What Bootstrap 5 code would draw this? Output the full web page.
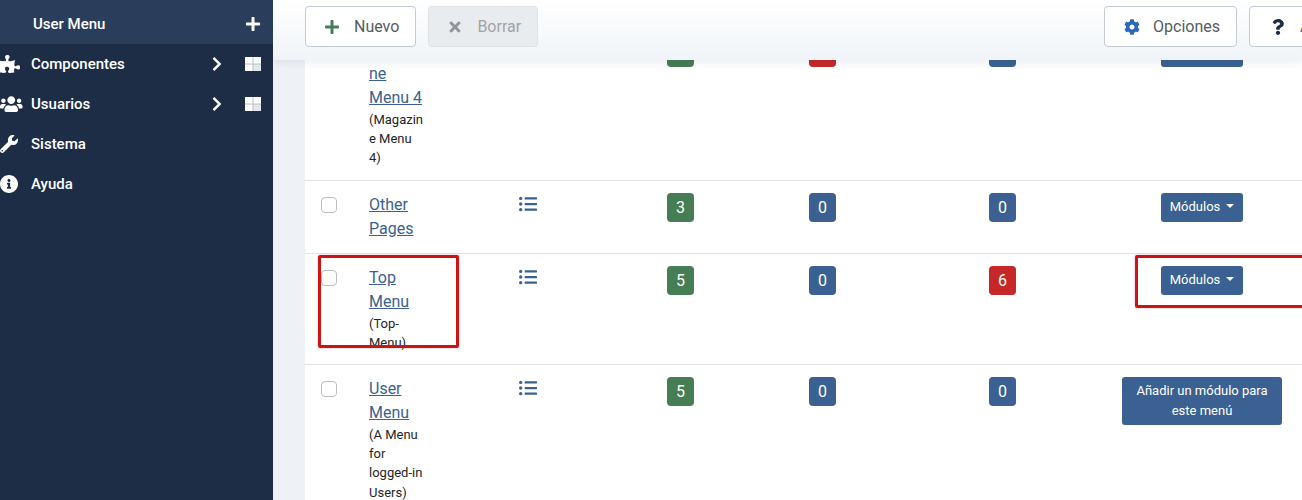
<!DOCTYPE html>
<html>
<head>
  <title>Menús</title>
  <meta charset="UTF-8" />
  <meta name="viewport" content="width=device-width, initial-scale=1" />
  <link href="https://cdn.jsdelivr.net/npm/bootstrap@5.3.2/dist/css/bootstrap.min.css" rel="stylesheet">
  <style>
    body { height: 500px; overflow: hidden; background: #eef2f7; font-family: Roboto, "Liberation Sans", sans-serif; }
    .shell { height: 500px; }
    .side-bar { width: 273px; background: #1c2d45; color: #fff; font-size: 15px; font-weight: 500; }
    .side-head { height: 44px; padding: 4px 13px 0 33px; background: #2a3e5c; }
    .side-item { height: 40px; padding: 0 12px 0 0; }
    .side-ico { width: 31px; flex: none; }
    .side-ico svg { height: 18px; display: block; fill: #fff; }
    .side-arrow { height: 16px; fill: #fff; margin-right: 23px; }
    .side-grid { width: 16px; height: 14px; }
    .side-plus { width: 14px; height: 16px; fill: #fff; }
    .main-area { flex: 1; min-width: 0; overflow: hidden; }
    .tool-bar { left: 0; right: 0; top: 0; height: 60px; padding: 6px 0 0 32px; z-index: 3;
      background: linear-gradient(#fff, #f0f4f8); box-shadow: 0 3px 8px rgba(30, 50, 80, .08); }
    .tool-btn { height: 41px; padding: 0 16px 0 19px; background: #fff; border: 1px solid #c3cad3; border-radius: 4px; color: #555b62; font-size: 16px; }
    .tool-btn svg { height: 16px; width: 14px; margin-right: 15px; flex: none; }
    .tool-btn.is-off { background: #e9ecef; border-color: #dee2e6; color: #9ea4aa; opacity: 1; }
    .tool-btn svg.ico-cog { width: 16px; margin-right: 13px; }
    .tool-gap { margin-left: 12px; }
    .tool-help { width: 120px; margin-right: -67px; padding-left: 21px; flex: none; }
    .sheet { margin: 26px 0 0 32px; }
    .menu-table { table-layout: fixed; width: 997px; margin: 0; border-color: #dfe2e6; }
    .menu-table td { padding: 12px 0 12px 16px; background: #fff; }
    .menu-table .mid-cell { padding: 12px 0 0; text-align: center; }
    .menu-check { width: 16px; height: 16px; margin: 4px 0 0; border-color: #b9bec4; }
    .name-box { width: 56px; overflow-wrap: anywhere; }
    .name-box a { color: #3a6191; line-height: 24px; display: block; }
    .name-box span { display: block; font-size: 13px; line-height: 19.2px; color: #212529; }
    .list-ico { height: 18px; width: 18px; fill: #3a6191; display: block; margin-top: 2px; }
    .num-tag { display: inline-block; width: 27px; height: 29px; line-height: 29px; border-radius: 4px; color: #fff; font-size: 16px; text-align: center; }
    .tag-green { background: #457d54; }
    .tag-blue { background: #3a6191; }
    .tag-red { background: #c52827; }
    .mod-btn { background: #3a6191; color: #fff; border: 0; height: 29px; width: 82px; padding: 0; font-size: 13px; border-radius: 3px; }
    .mod-btn::after { margin-left: 6px; border-top-width: 4px; border-left-width: 4px; border-right-width: 4px; }
    .mod-btn:hover, .add-btn:hover { background: #3a6191; color: #fff; }
    .add-btn { background: #3a6191; color: #fff; border: 0; width: 160px; height: 48px; padding: 0 10px; font-size: 13px; line-height: 20px; border-radius: 3px; }
    .mark-box { position: absolute; border: 3px solid #cc1417; border-radius: 2px; box-shadow: 0 0 2px rgba(204, 20, 23, .3); z-index: 2; }
    .mark-name { left: 45px; top: 255px; width: 141px; height: 93px; }
    .mark-mod { left: 862px; top: 255px; width: 190px; height: 53px; }
  </style>
</head>
<body>
  <div class="shell d-flex">
    <nav class="side-bar flex-shrink-0">
      <div class="side-head d-flex align-items-center justify-content-between">
        <span class="side-title">User Menu</span>
        <svg class="side-plus" viewBox="0 0 448 512"><path d="M416 208H272V64c0-17.67-14.33-32-32-32h-32c-17.67 0-32 14.33-32 32v144H32c-17.67 0-32 14.33-32 32v32c0 17.67 14.33 32 32 32h144v144c0 17.67 14.33 32 32 32h32c17.67 0 32-14.33 32-32V304h144c17.67 0 32-14.33 32-32v-32c0-17.67-14.33-32-32-32z"/></svg>
      </div>
      <div class="side-item d-flex align-items-center">
        <span class="side-ico"><svg viewBox="0 0 576 512"><path d="M519.442 288.651c-41.519 0-59.5 31.593-82.058 31.593C377.409 320.244 432 144 432 144s-196.288 80-196.288-3.297c0-35.827 36.288-46.25 36.288-85.985C272 19.216 243.885 0 210.539 0c-34.654 0-66.366 18.891-66.366 56.346 0 41.364 31.711 59.277 31.711 81.75C175.885 207.719 0 166.758 0 166.758v333.237s178.635 41.047 178.635-28.662c0-22.473-40-40.107-40-81.471 0-37.456 29.25-56.346 63.577-56.346 33.673 0 61.788 19.216 61.788 54.717 0 39.735-36.288 50.158-36.288 85.985 0 60.803 129.675 25.73 181.23 25.73 0 0-34.725-120.101 25.827-120.101 35.962 0 46.423 36.152 86.308 36.152C556.712 416 576 387.99 576 354.443c0-34.199-18.962-65.792-56.558-65.792z"/></svg></span>
        <span class="flex-grow-1">Componentes</span>
        <svg class="side-arrow" viewBox="0 0 320 512"><path d="M285.476 272.971L91.132 467.314c-9.373 9.373-24.569 9.373-33.941 0l-22.667-22.667c-9.357-9.357-9.375-24.522-.04-33.901L188.505 256 34.484 101.255c-9.335-9.379-9.317-24.544.04-33.901l22.667-22.667c9.373-9.373 24.569-9.373 33.941 0L285.475 239.03c9.373 9.372 9.373 24.568.001 33.941z"/></svg>
        <svg class="side-grid" viewBox="0 0 16 14"><rect width="16" height="14" fill="#b9c0c9"/><rect width="7.5" height="6.5" fill="#fff"/><rect x="8.5" width="7.5" height="6.5" fill="#fff"/><rect y="7.5" width="7.5" height="6.5" fill="#fff"/><rect x="8.5" y="7.5" width="7.5" height="6.5" fill="#e4e7eb"/></svg>
      </div>
      <div class="side-item d-flex align-items-center">
        <span class="side-ico"><svg viewBox="0 0 640 512"><path d="M96 224c35.3 0 64-28.7 64-64s-28.7-64-64-64-64 28.7-64 64 28.7 64 64 64zm448 0c35.3 0 64-28.7 64-64s-28.7-64-64-64-64 28.7-64 64 28.7 64 64 64zm32 32h-64c-17.6 0-33.5 7.1-45.1 18.6 40.3 22.1 68.9 62 75.1 109.4h66c17.7 0 32-14.3 32-32v-32c0-35.3-28.7-64-64-64zm-256 0c61.9 0 112-50.1 112-112S381.9 32 320 32 208 82.1 208 144s50.1 112 112 112zm76.8 32h-8.3c-20.8 10-43.9 16-68.5 16s-47.6-6-68.5-16h-8.3C179.6 288 128 339.6 128 403.2V432c0 26.5 21.5 48 48 48h288c26.5 0 48-21.5 48-48v-28.8c0-63.6-51.6-115.2-115.2-115.2zm-223.7-13.4C161.5 263.1 145.6 256 128 256H64c-35.3 0-64 28.7-64 64v32c0 17.7 14.3 32 32 32h65.9c6.3-47.4 34.9-87.3 75.2-109.4z"/></svg></span>
        <span class="flex-grow-1">Usuarios</span>
        <svg class="side-arrow" viewBox="0 0 320 512"><path d="M285.476 272.971L91.132 467.314c-9.373 9.373-24.569 9.373-33.941 0l-22.667-22.667c-9.357-9.357-9.375-24.522-.04-33.901L188.505 256 34.484 101.255c-9.335-9.379-9.317-24.544.04-33.901l22.667-22.667c9.373-9.373 24.569-9.373 33.941 0L285.475 239.03c9.373 9.372 9.373 24.568.001 33.941z"/></svg>
        <svg class="side-grid" viewBox="0 0 16 14"><rect width="16" height="14" fill="#b9c0c9"/><rect width="7.5" height="6.5" fill="#fff"/><rect x="8.5" width="7.5" height="6.5" fill="#fff"/><rect y="7.5" width="7.5" height="6.5" fill="#fff"/><rect x="8.5" y="7.5" width="7.5" height="6.5" fill="#e4e7eb"/></svg>
      </div>
      <div class="side-item d-flex align-items-center">
        <span class="side-ico"><svg viewBox="0 0 512 512"><path d="M507.73 109.1c-2.24-9.03-13.54-12.09-20.12-5.51l-74.36 74.36-67.88-11.31-11.31-67.88 74.36-74.36c6.62-6.62 3.43-17.9-5.66-20.16-47.38-11.74-99.55.91-136.58 37.93-39.64 39.64-50.55 97.1-34.05 147.2L18.74 402.76c-24.99 24.99-24.99 65.51 0 90.5 24.99 24.99 65.51 24.99 90.5 0l213.21-213.21c50.12 16.71 107.47 5.68 147.37-34.22 37.07-37.07 49.7-89.32 37.91-136.73zM64 472c-13.25 0-24-10.75-24-24 0-13.26 10.75-24 24-24s24 10.74 24 24c0 13.25-10.75 24-24 24z"/></svg></span>
        <span>Sistema</span>
      </div>
      <div class="side-item d-flex align-items-center">
        <span class="side-ico"><svg viewBox="8 8 496 496"><path d="M256 8C119.043 8 8 119.083 8 256c0 136.997 111.043 248 248 248s248-111.003 248-248C504 119.083 392.957 8 256 8zm0 110c23.196 0 42 18.804 42 42s-18.804 42-42 42-42-18.804-42-42 18.804-42 42-42zm56 254c0 6.627-5.373 12-12 12h-88c-6.627 0-12-5.373-12-12v-24c0-6.627 5.373-12 12-12h12v-64h-12c-6.627 0-12-5.373-12-12v-24c0-6.627 5.373-12 12-12h64c6.627 0 12 5.373 12 12v100h12c6.627 0 12 5.373 12 12v24z"/></svg></span>
        <span>Ayuda</span>
      </div>
    </nav>

    <main class="main-area position-relative">
      <div class="tool-bar position-absolute d-flex">
        <button class="btn tool-btn d-flex align-items-center"><svg viewBox="0 0 448 512" fill="#457d54"><path d="M416 208H272V64c0-17.67-14.33-32-32-32h-32c-17.67 0-32 14.33-32 32v144H32c-17.67 0-32 14.33-32 32v32c0 17.67 14.33 32 32 32h144v144c0 17.67 14.33 32 32 32h32c17.67 0 32-14.33 32-32V304h144c17.67 0 32-14.33 32-32v-32c0-17.67-14.33-32-32-32z"/></svg>Nuevo</button>
        <button class="btn tool-btn is-off tool-gap d-flex align-items-center" disabled><svg viewBox="0 0 352 512" fill="#8f959b"><path d="M242.72 256l100.07-100.07c12.28-12.28 12.28-32.19 0-44.48l-22.24-22.24c-12.28-12.28-32.19-12.28-44.48 0L176 189.28 75.93 89.21c-12.28-12.28-32.19-12.28-44.48 0L9.21 111.45c-12.28 12.28-12.28 32.19 0 44.48L109.28 256 9.21 356.07c-12.28 12.28-12.28 32.19 0 44.48l22.24 22.24c12.28 12.28 32.2 12.28 44.48 0L176 322.72l100.07 100.07c12.28 12.28 32.2 12.28 44.48 0l22.24-22.24c12.28-12.28 12.28-32.19 0-44.48L242.72 256z"/></svg>Borrar</button>
        <button class="btn tool-btn d-flex align-items-center ms-auto"><svg class="ico-cog" viewBox="0 0 512 512" fill="#2a69b8"><path d="M487.4 315.7l-42.6-24.6c4.3-23.2 4.3-47 0-70.2l42.6-24.6c4.9-2.8 7.1-8.6 5.5-14-11.1-35.6-30-67.8-54.7-94.6-3.8-4.1-10-5.1-14.8-2.3L380.8 110c-17.9-15.4-38.5-27.3-60.8-35.1V25.8c0-5.6-3.9-10.5-9.4-11.7-36.7-8.2-74.3-7.8-109.2 0-5.5 1.2-9.4 6.1-9.4 11.7V75c-22.2 7.9-42.8 19.8-60.8 35.1L88.7 85.5c-4.9-2.8-11-1.9-14.8 2.3-24.7 26.7-43.6 58.9-54.7 94.6-1.7 5.4.6 11.2 5.5 14L67.3 221c-4.3 23.2-4.3 47 0 70.2l-42.6 24.6c-4.9 2.8-7.1 8.6-5.5 14 11.1 35.6 30 67.8 54.7 94.6 3.8 4.1 10 5.1 14.8 2.3l42.6-24.6c17.9 15.4 38.5 27.3 60.8 35.1v49.2c0 5.6 3.9 10.5 9.4 11.7 36.7 8.2 74.3 7.8 109.2 0 5.5-1.2 9.4-6.1 9.4-11.7v-49.2c22.2-7.9 42.8-19.8 60.8-35.1l42.6 24.6c4.9 2.8 11 1.9 14.8-2.3 24.7-26.7 43.6-58.9 54.7-94.6 1.5-5.5-.7-11.3-5.6-14.1zM256 336c-44.1 0-80-35.9-80-80s35.9-80 80-80 80 35.9 80 80-35.9 80-80 80z"/></svg>Opciones</button>
        <button class="btn tool-btn tool-help tool-gap d-flex align-items-center"><svg viewBox="0 0 384 512" fill="#1c2d45"><path d="M202.021 0C122.202 0 70.503 32.703 29.914 91.026c-7.363 10.58-5.093 25.086 5.178 32.874l43.138 32.709c10.373 7.865 25.132 6.026 33.253-4.148 25.049-31.381 43.63-49.449 82.757-49.449 30.764 0 68.816 19.799 68.816 49.631 0 22.552-18.617 34.134-48.993 51.164-35.423 19.86-82.299 44.576-82.299 106.405V320c0 13.255 10.745 24 24 24h72.471c13.255 0 24-10.745 24-24v-5.773c0-42.86 125.268-44.645 125.268-160.627C377.504 66.256 286.902 0 202.021 0zM192 373.459c-38.196 0-69.271 31.075-69.271 69.271 0 38.195 31.075 69.27 69.271 69.27s69.271-31.075 69.271-69.271-31.075-69.27-69.271-69.27z"/></svg>Ayuda</button>
      </div>

      <div class="mark-box mark-name"></div>
      <div class="mark-box mark-mod"></div>

      <div class="sheet">
        <table class="table menu-table">
          <colgroup><col style="width:48px"><col style="width:150px"><col style="width:116px"><col style="width:123px"><col style="width:161px"><col style="width:199px"><col style="width:200px"></colgroup>
          <tbody>
            <tr>
              <td><input class="form-check-input menu-check" type="checkbox"></td>
              <td><div class="name-box"><a href="#">Magazine Menu 4</a><span>(Magazine Menu 4)</span></div></td>
              <td><svg class="list-ico" viewBox="0 0 512 512"><path d="M48 48a48 48 0 1 0 48 48 48 48 0 0 0-48-48zm0 160a48 48 0 1 0 48 48 48 48 0 0 0-48-48zm0 160a48 48 0 1 0 48 48 48 48 0 0 0-48-48zm448 16H176a16 16 0 0 0-16 16v32a16 16 0 0 0 16 16h320a16 16 0 0 0 16-16v-32a16 16 0 0 0-16-16zm0-320H176a16 16 0 0 0-16 16v32a16 16 0 0 0 16 16h320a16 16 0 0 0 16-16V80a16 16 0 0 0-16-16zm0 160H176a16 16 0 0 0-16 16v32a16 16 0 0 0 16 16h320a16 16 0 0 0 16-16v-32a16 16 0 0 0-16-16z"/></svg></td>
              <td class="mid-cell"><span class="num-tag tag-green">1</span></td>
              <td class="mid-cell"><span class="num-tag tag-red">1</span></td>
              <td class="mid-cell"><span class="num-tag tag-blue">0</span></td>
              <td class="mid-cell"><button class="btn mod-btn dropdown-toggle">Módulos</button></td>
            </tr>
            <tr>
              <td><input class="form-check-input menu-check" type="checkbox"></td>
              <td><div class="name-box"><a href="#">Other Pages</a></div></td>
              <td><svg class="list-ico" viewBox="0 0 512 512"><path d="M48 48a48 48 0 1 0 48 48 48 48 0 0 0-48-48zm0 160a48 48 0 1 0 48 48 48 48 0 0 0-48-48zm0 160a48 48 0 1 0 48 48 48 48 0 0 0-48-48zm448 16H176a16 16 0 0 0-16 16v32a16 16 0 0 0 16 16h320a16 16 0 0 0 16-16v-32a16 16 0 0 0-16-16zm0-320H176a16 16 0 0 0-16 16v32a16 16 0 0 0 16 16h320a16 16 0 0 0 16-16V80a16 16 0 0 0-16-16zm0 160H176a16 16 0 0 0-16 16v32a16 16 0 0 0 16 16h320a16 16 0 0 0 16-16v-32a16 16 0 0 0-16-16z"/></svg></td>
              <td class="mid-cell"><span class="num-tag tag-green">3</span></td>
              <td class="mid-cell"><span class="num-tag tag-blue">0</span></td>
              <td class="mid-cell"><span class="num-tag tag-blue">0</span></td>
              <td class="mid-cell"><button class="btn mod-btn dropdown-toggle">Módulos</button></td>
            </tr>
            <tr>
              <td><input class="form-check-input menu-check" type="checkbox"></td>
              <td><div class="name-box"><a href="#">Top Menu</a><span>(Top-Menu)</span></div></td>
              <td><svg class="list-ico" viewBox="0 0 512 512"><path d="M48 48a48 48 0 1 0 48 48 48 48 0 0 0-48-48zm0 160a48 48 0 1 0 48 48 48 48 0 0 0-48-48zm0 160a48 48 0 1 0 48 48 48 48 0 0 0-48-48zm448 16H176a16 16 0 0 0-16 16v32a16 16 0 0 0 16 16h320a16 16 0 0 0 16-16v-32a16 16 0 0 0-16-16zm0-320H176a16 16 0 0 0-16 16v32a16 16 0 0 0 16 16h320a16 16 0 0 0 16-16V80a16 16 0 0 0-16-16zm0 160H176a16 16 0 0 0-16 16v32a16 16 0 0 0 16 16h320a16 16 0 0 0 16-16v-32a16 16 0 0 0-16-16z"/></svg></td>
              <td class="mid-cell"><span class="num-tag tag-green">5</span></td>
              <td class="mid-cell"><span class="num-tag tag-blue">0</span></td>
              <td class="mid-cell"><span class="num-tag tag-red">6</span></td>
              <td class="mid-cell"><button class="btn mod-btn dropdown-toggle">Módulos</button></td>
            </tr>
            <tr>
              <td><input class="form-check-input menu-check" type="checkbox"></td>
              <td><div class="name-box"><a href="#">User Menu</a><span>(A Menu for logged-in Users)</span></div></td>
              <td><svg class="list-ico" viewBox="0 0 512 512"><path d="M48 48a48 48 0 1 0 48 48 48 48 0 0 0-48-48zm0 160a48 48 0 1 0 48 48 48 48 0 0 0-48-48zm0 160a48 48 0 1 0 48 48 48 48 0 0 0-48-48zm448 16H176a16 16 0 0 0-16 16v32a16 16 0 0 0 16 16h320a16 16 0 0 0 16-16v-32a16 16 0 0 0-16-16zm0-320H176a16 16 0 0 0-16 16v32a16 16 0 0 0 16 16h320a16 16 0 0 0 16-16V80a16 16 0 0 0-16-16zm0 160H176a16 16 0 0 0-16 16v32a16 16 0 0 0 16 16h320a16 16 0 0 0 16-16v-32a16 16 0 0 0-16-16z"/></svg></td>
              <td class="mid-cell"><span class="num-tag tag-green">5</span></td>
              <td class="mid-cell"><span class="num-tag tag-blue">0</span></td>
              <td class="mid-cell"><span class="num-tag tag-blue">0</span></td>
              <td class="mid-cell"><button class="btn add-btn">Añadir un módulo para este menú</button></td>
            </tr>
          </tbody>
        </table>
      </div>
    </main>
  </div>
  <script src="https://cdn.jsdelivr.net/npm/bootstrap@5.3.2/dist/js/bootstrap.bundle.min.js"></script>
</body>
</html>
